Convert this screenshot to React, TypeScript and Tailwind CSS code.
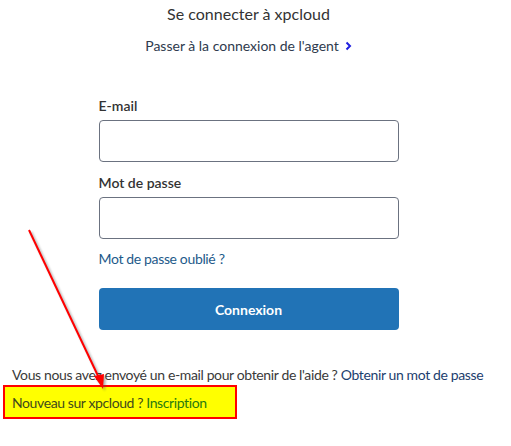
import React from "react";

export default function App() {
  return (
    <div className="relative w-[511px] h-[446px] bg-white overflow-hidden font-['Lato',sans-serif] text-[#333333]">
      <div className="w-[497px] flex flex-col items-center">
        <h1 className="mt-[3px] text-[16px] leading-[22px] font-normal">Se connecter à xpcloud</h1>
        <div className="mt-[11px] text-[14px] leading-[20px] text-[#2e3a4d] flex items-center gap-[6px]">
          <span>Passer à la connexion de l'agent</span>
          <svg width="7" height="10" viewBox="0 0 7 10">
            <path d="M1.5 1.5 L5 5 L1.5 8.5" fill="none" stroke="#1f1fe0" strokeWidth="2" />
          </svg>
        </div>
        <div className="w-[300px] mt-[40px] flex flex-col">
          <label className="text-[14px] leading-[20px] font-semibold text-[#333]">E-mail</label>
          <div className="mt-[4px] h-[42px] rounded-[4px] border border-[#6b7280]" />
          <label className="mt-[11px] text-[14px] leading-[20px] font-semibold text-[#333]">Mot de passe</label>
          <div className="mt-[4px] h-[42px] rounded-[4px] border border-[#6b7280]" />
          <a className="mt-[10px] text-[14px] leading-[20px] tracking-[-0.35px] text-[#1e5a8a]">Mot de passe oublié ?</a>
          <button className="mt-[19px] h-[42px] rounded-[4px] bg-[#2173b6] text-white text-[14px] font-bold">Connexion</button>
        </div>
      </div>
      <div className="mt-[35px] px-[12px] text-[14px] leading-[20px] tracking-[-0.37px] whitespace-nowrap text-[#3a3a3a]">
        Vous nous avez envoyé un e-mail pour obtenir de l'aide ? <a className="text-[#1c3e6e]">Obtenir un mot de passe</a>
      </div>
      <div className="ml-[3px] w-[234px] h-[34px] border-2 border-[#ff0000] bg-[#ffff00] flex items-center pl-[7px] text-[14px] tracking-[-0.4px] text-[#3f4a1c] whitespace-nowrap">
        Nouveau sur xpcloud ?&nbsp;<span className="text-[#2a7a10]">Inscription</span>
      </div>
      <svg className="absolute left-0 top-0 pointer-events-none" width="511" height="446" viewBox="0 0 511 446">
        <defs>
          <filter id="sh" x="-20%" y="-20%" width="140%" height="140%">
            <feGaussianBlur stdDeviation="1.2" />
          </filter>
        </defs>
        <g opacity="0.45" filter="url(#sh)" transform="translate(2,2)">
          <line x1="29" y1="230" x2="100" y2="380" stroke="#555" strokeWidth="2" />
          <path d="M103 389 L94 376 L104 374 Z" fill="#555" />
        </g>
        <line x1="29" y1="230" x2="99" y2="378" stroke="#ff0000" strokeWidth="2" />
        <path d="M103 389 L94 376 L104 374 Z" fill="#ff0000" />
      </svg>
    </div>
  );
}
